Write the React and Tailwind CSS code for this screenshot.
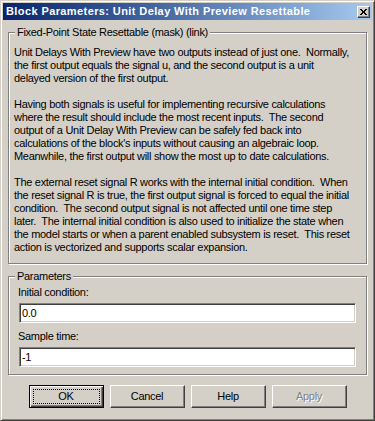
const font = { fontFamily: '"Liberation Sans", Arial, sans-serif' };

const GroupBox = ({ label, className, children }) => (
    <div className={`mx-[5px] flex flex-col border border-[#808080] shadow-[inset_1px_1px_0_#fff,1px_1px_0_#fff] ${className}`}>
        <span className="-mt-[7px] ml-[6px] self-start bg-[#d4d0c8] px-[2px] leading-[13px]">{label}</span>
        {children}
    </div>
);

const TextField = ({ value }) => (
    <div className="mx-[10px] mt-[4px] h-[20px] border border-t-[#808080] border-l-[#808080] border-b-white border-r-white bg-white pl-[2px] leading-[18px] shadow-[inset_1px_1px_0_#404040,inset_-1px_-1px_0_#d4d0c8]">
        {value}
    </div>
);

const Button = ({ children, primary, disabled }) => {
    if (primary) {
        return (
            <button className="flex h-[23px] w-[75px] items-center justify-center border border-black bg-[#d4d0c8] p-[3px] shadow-[inset_1px_1px_0_#fff,inset_-1px_-1px_0_#404040,inset_-2px_-2px_0_#808080]">
                <span className="flex h-full w-full items-center justify-center border border-dotted border-black leading-[13px]">{children}</span>
            </button>
        );
    }
    return (
        <button className={`flex h-[23px] w-[75px] items-center justify-center border border-t-white border-l-white border-r-[#404040] border-b-[#404040] bg-[#d4d0c8] leading-[13px] shadow-[inset_-1px_-1px_0_#808080] ${disabled ? "text-[#808080] [text-shadow:1px_1px_0_#fff]" : ""}`}>
            {children}
        </button>
    );
};

export default function App() {
    return (
        <div
            style={font}
            className="flex h-[421px] w-[375px] flex-col border border-t-[#d4d0c8] border-l-[#d4d0c8] border-r-[#404040] border-b-[#404040] bg-[#d4d0c8] p-[2px] text-[11px] tracking-[-0.3px] text-black shadow-[inset_1px_1px_0_#fff,inset_-1px_-1px_0_#808080]"
        >
            <div className="flex h-[17px] items-center justify-between bg-gradient-to-r from-[#0a246a] to-[#a6caf0] pl-[3px] pr-[2px]">
                <span className="whitespace-nowrap text-[11px] font-bold tracking-[0.4px] text-white">
                    Block Parameters: Unit Delay With Preview Resettable
                </span>
                <span className="flex h-[12px] w-[13px] items-center justify-center border border-t-white border-l-white border-r-[#404040] border-b-[#404040] bg-[#d4d0c8] shadow-[inset_-1px_-1px_0_#808080]">
                    <svg width="7" height="6" viewBox="0 0 7 6" shapeRendering="crispEdges">
                        <path d="M0 0h2v1H0zM5 0h2v1H5zM1 1h2v1H1zM4 1h2v1H4zM2 2h3v1H2zM2 3h3v1H2zM1 4h2v1H1zM4 4h2v1H4zM0 5h2v1H0zM5 5h2v1H5z" fill="#000" />
                    </svg>
                </span>
            </div>

            <GroupBox label="Fixed-Point State Resettable (mask) (link)" className="mt-[12px] pb-[9px]">
                <div className="mt-[7px] whitespace-pre pl-[5px] leading-[13px]">
                    <p>
                        Unit Delays With Preview have two outputs instead of just one.  Normally,<br />
                        the first output equals the signal u, and the second output is a unit<br />
                        delayed version of the first output.
                    </p>
                    <p className="mt-[13px]">
                        Having both signals is useful for implementing recursive calculations<br />
                        where the result should include the most recent inputs.  The second<br />
                        output of a Unit Delay With Preview can be safely fed back into<br />
                        calculations of the block's inputs without causing an algebraic loop.<br />
                        Meanwhile, the first output will show the most up to date calculations.
                    </p>
                    <p className="mt-[13px]">
                        The external reset signal R works with the internal initial condition.  When<br />
                        the reset signal R is true, the first output signal is forced to equal the initial<br />
                        condition.  The second output signal is not affected until one time step<br />
                        later.  The internal initial condition is also used to initialize the state when<br />
                        the model starts or when a parent enabled subsystem is reset.  This reset<br />
                        action is vectorized and supports scalar expansion.
                    </p>
                </div>
            </GroupBox>

            <GroupBox label="Parameters" className="mt-[12px] pb-[7px]">
                <span className="mt-[3px] ml-[9px] leading-[13px]">Initial condition:</span>
                <TextField value="0.0" />
                <span className="mt-[7px] ml-[9px] leading-[13px]">Sample time:</span>
                <TextField value="-1" />
            </GroupBox>

            <div className="mt-[10px] flex justify-center gap-[6px]">
                <Button primary>OK</Button>
                <Button>Cancel</Button>
                <Button>Help</Button>
                <Button disabled>Apply</Button>
            </div>
        </div>
    );
}
